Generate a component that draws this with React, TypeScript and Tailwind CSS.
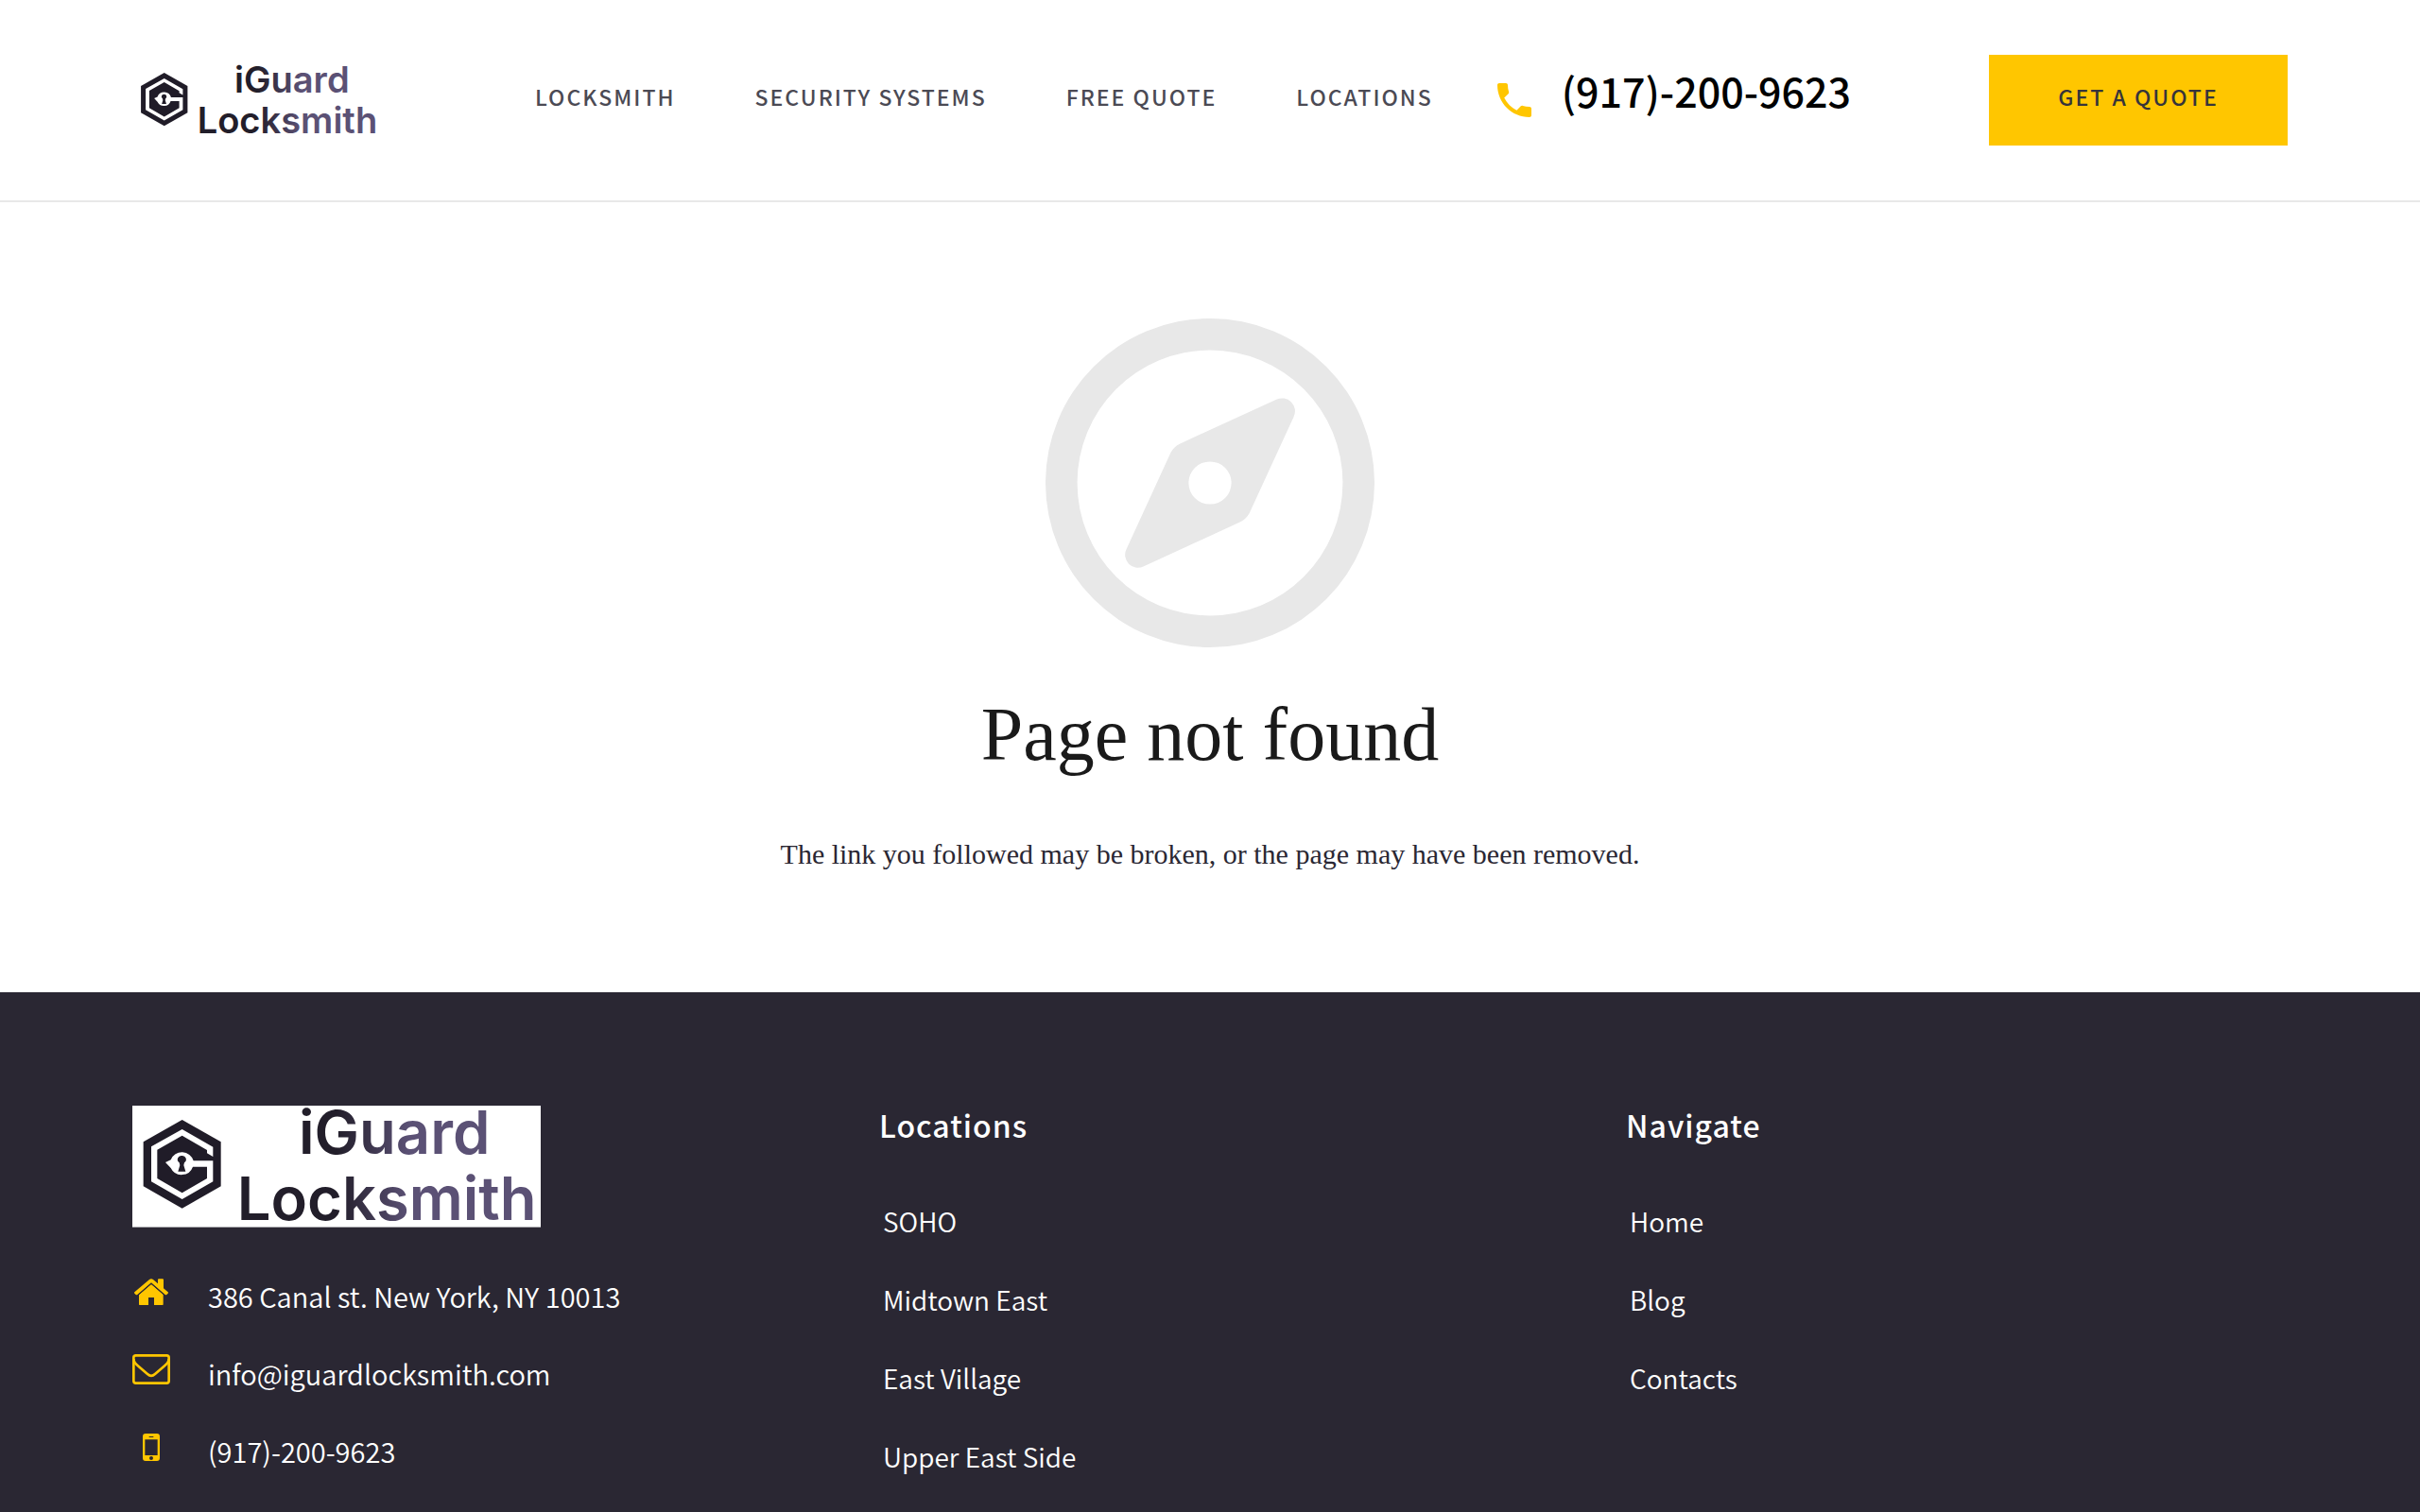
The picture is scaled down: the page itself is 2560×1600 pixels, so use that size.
const navLinks = ['Locksmith', 'Security Systems', 'Free Quote', 'Locations'];

const locations = ['SOHO', 'Midtown East', 'East Village', 'Upper East Side'];

const pages = ['Home', 'Blog', 'Contacts'];

function Logo({ id, className }: { id: string; className: string }) {
  return (
    <svg viewBox="12 12 1296 384" className={`overflow-visible ${className}`} role="img" aria-label="iGuard Locksmith">
      <defs>
        <linearGradient id={id} gradientUnits="userSpaceOnUse" x1="660" y1="0" x2="890" y2="0">
          <stop offset="0" stopColor="#221e2a" />
          <stop offset="1" stopColor="#5b5175" />
        </linearGradient>
      </defs>
      {/* Hexagon with the G cut-out and the keyhole */}
      <path d="M170 57 293 127V268L170 338 47 268V127Z" fill="#201c28" />
      <path
        d="M170 87 268 143V174L249 163V153L170 107 91 152V243L170 289 249 243V206H204A38 38 0 0 1 134 210L117 192 134 184A38 38 0 0 1 206 187H268V253L170 309 72 253V142Z"
        fill="#fff"
      />
      <path d="M169 171a12 12 0 0 1 8 22l-2 8 6 20h-24l6-20-2-8a12 12 0 0 1 8-22z" fill="#201c28" />
      <g fill={`url(#${id})`} className="font-[Inter] font-semibold">
        <text x="540" y="164" fontSize="190">iGuard</text>
        <text x="344" y="374" fontSize="190">Locksmith</text>
      </g>
    </svg>
  );
}

function PhoneIcon() {
  return (
    <svg viewBox="0 0 24 24" className="size-12 text-[#ffc600]" fill="currentColor" aria-hidden="true">
      <path d="M6.620 10.790c1.440 2.830 3.760 5.140 6.590 6.590l2.200-2.200c.270-.270.670-.360 1.020-.240 1.120.370 2.330.570 3.570.570.550 0 1 .450 1 1V20c0 .550-.450 1-1 1-9.390 0-17-7.610-17-17 0-.550.450-1 1-1h3.500c.550 0 1 .450 1 1 0 1.250.200 2.450.570 3.570.110.350.030.740-.250 1.020z" />
    </svg>
  );
}

function Compass() {
  return (
    <svg viewBox="77 80 1046 1046" className="size-[348px] text-[#e8e8e8]" fill="currentColor" aria-hidden="true">
      <path
        fillRule="evenodd"
        d="M600 80a523 523 0 1 1 0 1046a523 523 0 1 1 0-1046zM600 181a422 422 0 1 0 0 844a422 422 0 1 0 0-844z"
      />
      <path
        fillRule="evenodd"
        d="M811 338A41 41 0 0 1 866 393L725 700Q715 718 695 728L388 869A41 41 0 0 1 334 814L475 507Q485 487 505 478ZM600 535a68 68 0 1 0 0 136a68 68 0 1 0 0-136z"
      />
    </svg>
  );
}

function HomeIcon() {
  return (
    <svg viewBox="0 0 108 86" className="w-9" fill="currentColor" aria-hidden="true">
      <path d="M54 18 92 50V80Q92 86 86 86H63V60H45V86H21Q15 86 15 80V50Z" />
      <path d="M48 3Q54-2 60 3L75 16V4Q75 1 78 1H90Q93 1 93 4V31L107 43Q109 45 107 47L103 51Q101 53 98 51L54 13 10 51Q7 53 5 51L1 47Q-1 45 1 43Z" />
      <path d="M12 53 54 16 96 53" fill="none" stroke="#2a2733" strokeWidth="3" />
    </svg>
  );
}

function MailIcon() {
  return (
    <svg viewBox="0 0 120 96" className="w-10" fill="none" stroke="currentColor" strokeWidth="8" aria-hidden="true">
      <rect x="4" y="4" width="112" height="88" rx="7" />
      <path d="M4 15C4 27 14 34 20 39L48 63Q60 74 72 63L100 39C106 34 116 27 116 15" />
    </svg>
  );
}

function MobileIcon() {
  return (
    <svg viewBox="0 0 54 87" className="w-[18px]" fill="currentColor" aria-hidden="true">
      <path
        fillRule="evenodd"
        d="M9 0H45Q54 0 54 9V78Q54 87 45 87H9Q0 87 0 78V9Q0 0 9 0ZM7 19V69H47V19ZM20 9V12H34V9ZM27 72a6 6 0 1 0 0 12a6 6 0 1 0 0-12z"
      />
    </svg>
  );
}

const contacts = [
  { icon: HomeIcon, text: '386 Canal st. New York, NY 10013' },
  { icon: MailIcon, text: 'info@iguardlocksmith.com', href: 'mailto:info@iguardlocksmith.com' },
  { icon: MobileIcon, text: '(917)-200-9623', href: 'tel:9172009623' },
];

function FooterLinks({ title, links }: { title: string; links: string[] }) {
  return (
    <nav aria-label={title}>
      <h3 className="text-[32px] leading-10 font-medium tracking-[1px]">{title}</h3>
      <ul className="mt-15 flex flex-col gap-[39px] pl-1 text-[28px] leading-[44px]">
        {links.map((link) => (
          <li key={link}>
            <a href="#" className="block hover:text-[#ffc600]">{link}</a>
          </li>
        ))}
      </ul>
    </nav>
  );
}

export default function App() {
  return (
    <div className="flex min-h-screen flex-col bg-white font-['Noto_Sans_CJK_SC',sans-serif]">
      <header className="flex h-[214px] items-center border-b-2 border-[#e8e8e8] px-[140px]">
        <a href="#" className="ml-0.5 shrink-0">
          <Logo id="logo-header" className="h-[77px] w-[260px]" />
        </a>
        <nav className="ml-[164px] flex gap-[84px] pb-2 text-[23px] leading-8 font-medium tracking-[2px] whitespace-nowrap text-[#4b4a54] uppercase">
          {navLinks.map((link) => (
            <a key={link} href="#" className="hover:text-[#ffc600]">{link}</a>
          ))}
        </nav>
        <a href="tel:9172009623" className="ml-[62px] flex items-center gap-[26px] whitespace-nowrap">
          <PhoneIcon />
          <span className="pb-[22px] text-[43px] leading-none font-medium text-black">(917)-200-9623</span>
        </a>
        <button
          type="button"
          className="ml-auto h-24 w-[316px] shrink-0 bg-[#ffc600] pb-2 text-[23px] leading-8 font-medium tracking-[2px] text-[#36343a] uppercase"
        >
          Get a quote
        </button>
      </header>

      <main className="flex flex-col items-center px-[140px] pt-[123px] pb-[122px] text-center font-['Liberation_Serif',serif]">
        <Compass />
        <h1 className="mt-11 text-[80px] leading-[96px] text-[#1a1a1a]">Page not found</h1>
        <p className="mt-[55px] text-[30px] leading-[48px] text-[#2a2733]">
          The link you followed may be broken, or the page may have been removed.
        </p>
      </main>

      <footer className="grid grow grid-cols-3 content-start gap-[90px] bg-[#2a2733] px-[140px] pt-[120px] pb-9 text-[29px] leading-[44px] font-[350] text-white">
        <div>
          <div className="w-[432px] border-b border-[#a9a8ad] bg-white">
            <Logo id="logo-footer" className="block w-full" />
          </div>
          <ul className="mt-[50px] flex flex-col gap-[38px]">
            {contacts.map(({ icon: Icon, text, href }) => (
              <li key={text} className="flex gap-10">
                <span className="flex h-9 w-10 shrink-0 items-center justify-center text-[#ffc600]">
                  <Icon />
                </span>
                {href ? <a href={href}>{text}</a> : <span>{text}</span>}
              </li>
            ))}
          </ul>
        </div>
        <FooterLinks title="Locations" links={locations} />
        <FooterLinks title="Navigate" links={pages} />
      </footer>
    </div>
  );
}
